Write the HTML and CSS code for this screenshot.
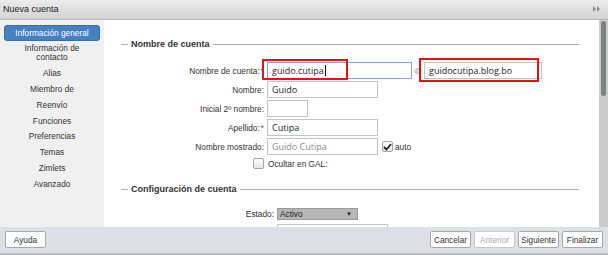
FILE: index.html
```html
<!DOCTYPE html>
<html lang="es">
<head>
  <meta charset="UTF-8" />
  <title>Nueva cuenta</title>
  <link rel="stylesheet" href="styles.css">
</head>
<body>
  <div class="dialog">
    <div class="titlebar">
      <span class="title">Nueva cuenta</span>
      <svg class="collapse" width="7" height="6" viewBox="0 0 7 6">
        <path d="M0 0 L3 3 L0 6 Z M4 0 L7 3 L4 6 Z" fill="#8a8a8a" />
      </svg>
    </div>

    <div class="main">
      <ul class="nav">
        <li class="active">Información general</li>
        <li class="double">Información de<br>contacto</li>
        <li>Alias</li>
        <li>Miembro de</li>
        <li>Reenvío</li>
        <li>Funciones</li>
        <li>Preferencias</li>
        <li>Temas</li>
        <li>Zimlets</li>
        <li>Avanzado</li>
      </ul>

      <div class="content">
        <div class="legend"><span>Nombre de cuenta</span></div>
        <div class="form">
          <div class="label">Nombre de cuenta:<span class="req">*</span></div>
          <div class="field">
            <div class="input focus w-user">guido.cutipa<span class="caret"></span></div>
            <span class="at">@</span>
            <div class="input w-domain">guidocutipa.blog.bo</div>
          </div>

          <div class="label">Nombre:</div>
          <div class="field"><div class="input w-wide">Guido</div></div>

          <div class="label">Inicial 2º nombre:</div>
          <div class="field"><div class="input w-short"></div></div>

          <div class="label">Apellido:<span class="req">*</span></div>
          <div class="field"><div class="input w-wide">Cutipa</div></div>

          <div class="label">Nombre mostrado:</div>
          <div class="field">
            <div class="input w-wide muted">Guido Cutipa</div>
            <span class="check checked">
              <svg width="9" height="8" viewBox="0 0 9 8"><path d="M1 4 L3.5 6.5 L8 1" fill="none" stroke="#222" stroke-width="1.8" /></svg>
            </span>
            <span class="check-text">auto</span>
          </div>

          <div class="label short"><span class="check"></span></div>
          <div class="field short"><span class="check-text">Ocultar en GAL:</span></div>
        </div>

        <div class="legend second"><span>Configuración de cuenta</span></div>
        <div class="form wide-labels">
          <div class="label">Estado:</div>
          <div class="field">
            <div class="select">Activo<span class="arrow">&#9660;</span></div>
          </div>

          <div class="label"></div>
          <div class="field"><div class="input w-next"></div></div>
        </div>

        <span class="mark mark-user"></span>
        <span class="mark mark-domain"></span>
      </div>

      <div class="scrollbar"><div class="thumb"></div></div>
    </div>

    <div class="footer">
      <button class="btn">Ayuda</button>
      <div class="actions">
        <button class="btn">Cancelar</button>
        <button class="btn" disabled>Anterior</button>
        <button class="btn">Siguiente</button>
        <button class="btn">Finalizar</button>
      </div>
    </div>
  </div>
</body>
</html>
```

FILE: styles.css
```css
* {
  box-sizing: border-box;
}
body {
  margin: 0;
  font-family: 'Liberation Sans', Arial, sans-serif;
  font-size: 8.3px;
  color: #333;
  background: #fff;
}
.dialog {
  width: 608px;
  height: 255px;
  display: flex;
  flex-direction: column;
  overflow: hidden;
}
.titlebar {
  height: 20px;
  flex: none;
  display: flex;
  align-items: center;
  justify-content: space-between;
  padding: 0 8px 1px 3px;
  background: linear-gradient(#ececec, #d3d3d3);
  border-bottom: 1px solid #b9b9b9;
}
.title {
  font-size: 9px;
  color: #222;
}
.main {
  flex: 1;
  display: flex;
  min-height: 0;
}
.nav {
  width: 104px;
  flex: none;
  margin: 0;
  padding: 5px 4px 0 4px;
  list-style: none;
  background: #f0f0f0;
  text-align: center;
  color: #333;
}
.nav li {
  line-height: 15.85px;
}
.nav li.active {
  height: 16px;
  line-height: 15px;
  margin-bottom: 1px;
  background: #4780c2;
  border: 1px solid #3a6ea9;
  border-radius: 3px;
  color: #fff;
}
.nav li.double {
  line-height: 9px;
  padding: 2px 0 4px;
}
.content {
  flex: 1;
  position: relative;
  padding: 18px 20px 0 17px;
  overflow: hidden;
}
.legend {
  display: flex;
  align-items: center;
  gap: 3px;
  height: 12px;
  font-size: 9px;
  font-weight: bold;
  color: #333;
}
.legend::before,
.legend::after {
  content: "";
  height: 1px;
  background: #b0b0b0;
}
.legend::before {
  width: 7px;
}
.legend::after {
  flex: 1;
}
.legend.second {
  margin-top: 8px;
}
.form {
  display: grid;
  grid-template-columns: 160px 1fr;
  column-gap: 3px;
  grid-auto-rows: 19px;
  margin: 11px 0 0 -17px;
}
.form.wide-labels {
  grid-template-columns: 170px 1fr;
  margin-top: 9px;
}
.label {
  display: flex;
  align-items: center;
  justify-content: flex-end;
  white-space: nowrap;
}
.label.short,
.field.short {
  height: 15px;
}
.req {
  color: #d22;
  margin-left: 1px;
}
.field {
  display: flex;
  align-items: center;
}
.input {
  height: 17px;
  border: 1px solid #c4c4c4;
  background: #fff;
  padding: 0 4px;
  display: flex;
  align-items: center;
  font-family: 'Open Sans', 'Noto Sans', sans-serif;
  font-size: 9px;
  color: #1e1e1e;
}
.input.focus {
  border-color: #86a8d4;
}
.input.muted {
  color: #8a8a8a;
}
.caret {
  width: 1px;
  height: 11px;
  background: #111;
  margin-left: 1px;
}
.w-user { width: 145px; }
.w-domain { width: 118px; }
.w-wide { width: 111px; }
.w-short { width: 41px; }
.w-next { width: 111px; }
.at {
  width: 12px;
  text-align: center;
  color: #999;
  font-size: 8px;
}
.check {
  width: 11px;
  height: 11px;
  border: 1px solid #a5a5a5;
  border-radius: 2px;
  background: linear-gradient(#fdfdfd, #e6e6e6);
  display: inline-flex;
  align-items: center;
  justify-content: center;
}
.check.checked {
  margin-left: 4px;
}
.check-text {
  margin-left: 2px;
}
.field.short .check-text {
  margin-left: 1px;
}
.select {
  width: 81px;
  height: 12px;
  background: #b6b6b6;
  border: 1px solid #9c9c9c;
  display: flex;
  align-items: center;
  justify-content: space-between;
  padding: 0 5px 0 2px;
  color: #222;
}
.arrow {
  font-size: 6px;
  color: #222;
}
.mark {
  position: absolute;
  border: 2px solid #e31414;
}
.mark-user {
  left: 158px;
  top: 39px;
  width: 86px;
  height: 21px;
}
.mark-domain {
  left: 315px;
  top: 38px;
  width: 120px;
  height: 24px;
}
.scrollbar {
  width: 9px;
  flex: none;
  background: #cbcbcb;
  padding: 1px 2px 0 2px;
}
.thumb {
  height: 75px;
  background: #7c8383;
  border-radius: 3px;
}
.footer {
  height: 28px;
  flex: none;
  display: flex;
  justify-content: space-between;
  align-items: flex-start;
  padding: 4px 5px 0 5px;
  background: #dde1e6;
  border-bottom: 2px solid #b9bdc2;
}
.actions {
  display: flex;
  gap: 3px;
}
.btn {
  height: 17px;
  width: 41px;
  padding: 0;
  font-family: 'Liberation Sans', Arial, sans-serif;
  font-size: 8.3px;
  color: #333;
  background: #fff;
  border: 1px solid #a9a9a9;
  border-radius: 2px;
}
.btn:disabled {
  color: #aaa;
  border-color: #c8c8c8;
}
```
